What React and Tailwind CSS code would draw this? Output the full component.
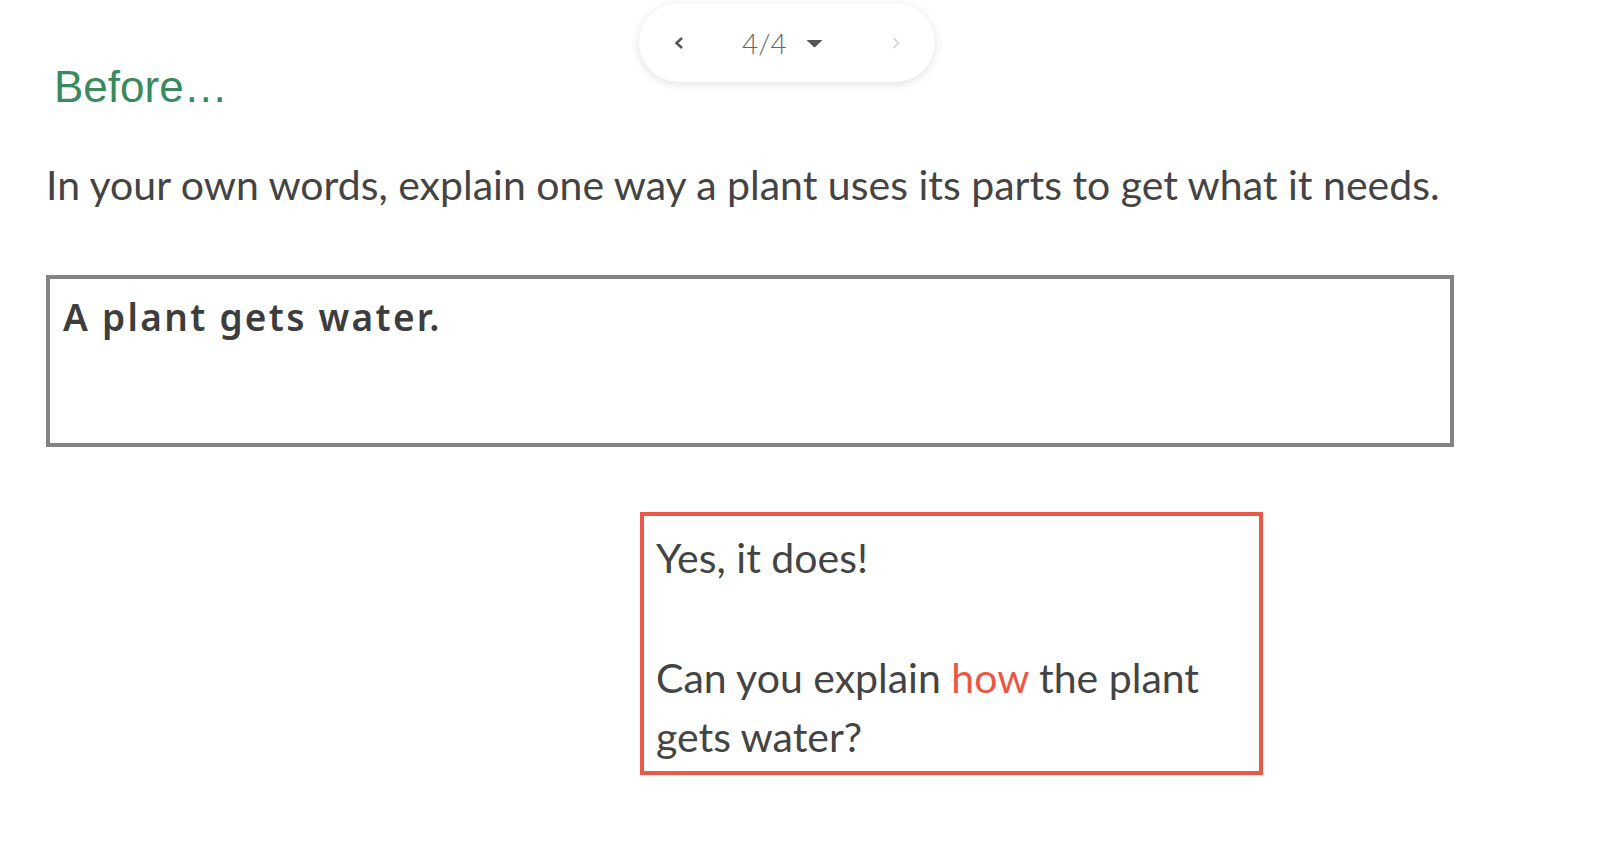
import React from "react";

function Pager() {
  return (
    <div className="absolute left-[639px] top-[3px] w-[296px] h-[79px] rounded-full bg-white shadow-[0_2px_10px_rgba(0,0,0,0.12)] flex items-center">
      <svg className="ml-[34px]" width="12" height="14" viewBox="0 0 12 14">
        <path d="M9 2 L3.5 7 L9 12" fill="none" stroke="#555" strokeWidth="2.6" />
      </svg>
      <span className="ml-[57px] text-[28px] leading-none text-[#666] font-['Lato',sans-serif] font-light">4/4</span>
      <svg className="ml-[19px] mt-[2px]" width="17" height="9" viewBox="0 0 17 9">
        <path d="M1.5 1 L15.5 1 Q16.5 1 15.8 1.8 L9.2 8 Q8.5 8.6 7.8 8 L1.2 1.8 Q0.5 1 1.5 1 Z" fill="#555" />
      </svg>
      <svg className="ml-[68px]" width="10" height="14" viewBox="0 0 10 14">
        <path d="M2.5 2 L7.5 7 L2.5 12" fill="none" stroke="#d8d8d8" strokeWidth="1.8" />
      </svg>
    </div>
  );
}

export default function App() {
  return (
    <div className="relative w-[1598px] h-[848px] bg-white overflow-hidden">
      <Pager />
      <div className="pl-[46px] pt-[59px]">
        <h1 className="ml-[8px] text-[44px] leading-[56px] text-[#3a8a60] font-['Liberation_Sans',Arial,sans-serif]">
          Before…
        </h1>
        <p className="mt-[45px] text-[41px] leading-[50px] text-[#444] font-['Lato',sans-serif]">
          In your own words, explain one way a plant uses its parts to get what it needs.
        </p>
        <div className="mt-[65px] w-[1408px] h-[172px] border-[4px] border-[#838383] pl-[13px] pt-[16px]">
          <p className="text-[37px] leading-[44px] text-[#3d3d3d] font-semibold tracking-[2.3px] font-['Noto_Sans',sans-serif]">
            A plant gets water.
          </p>
        </div>
        <div className="mt-[65px] ml-[594px] w-[623px] h-[263px] border-[4px] border-[#e8594a] pl-[12px] pt-[12px] text-[41px] leading-[59px] text-[#444] font-['Lato',sans-serif]">
          <p>Yes, it does!</p>
          <p className="mt-[61px]">
            Can you explain <span className="text-[#ec5745]">how</span> the plant gets water?
          </p>
        </div>
      </div>
    </div>
  );
}
